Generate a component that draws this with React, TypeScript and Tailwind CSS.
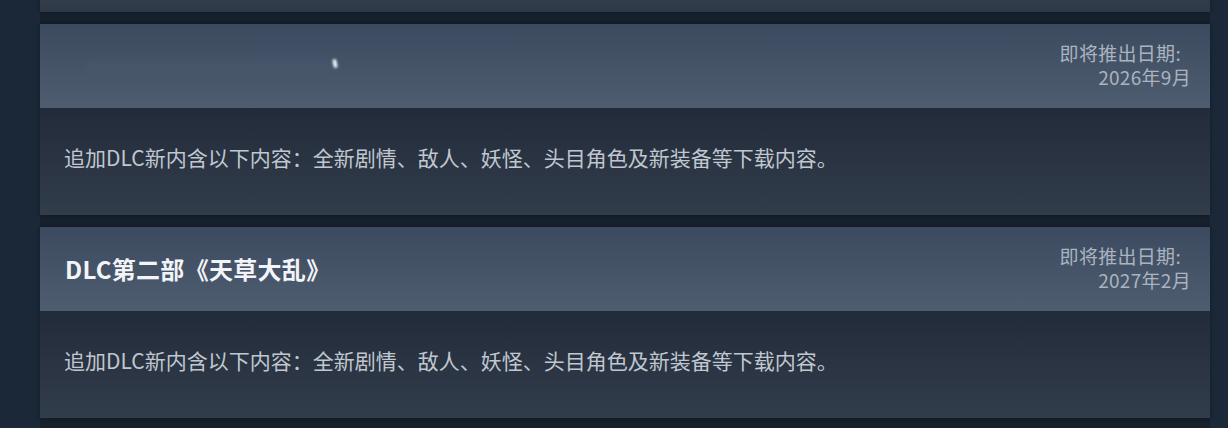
const font = { fontFamily: '"Noto Sans CJK SC", "Noto Sans", sans-serif' };

interface Dlc {
  title?: string;
  date: string;
}

const DLCS: Dlc[] = [
  { date: '2026年9月' },
  { title: 'DLC第二部《天草大乱》', date: '2027年2月' },
];

const DESC = '追加DLC新内含以下内容：全新剧情、敌人、妖怪、头目角色及新装备等下载内容。';

function DlcCard({ dlc }: { dlc: Dlc }) {
  return (
    <div className="shadow-[0_0_4px_rgba(0,0,0,0.35)]">
      <div className="relative h-[84px] flex items-center justify-between pl-[25px] pr-[19px] bg-gradient-to-b from-[#3c4a5f] to-[#4f5d71]">
        {dlc.title ? (
          <h2 className="text-[24px] leading-[30px] font-bold text-[#f2f4f7] tracking-[0.3px]">{dlc.title}</h2>
        ) : (
          <div className="relative w-[300px] h-[30px]">
            {/* faint blurred logo */}
            <div className="absolute left-[20px] top-[10px] w-[250px] h-[10px] rounded-full bg-[#566680] opacity-20 blur-[4px]" />
            <div className="absolute left-[268px] top-[8px] w-[4px] h-[9px] rounded-full bg-[#e8eef5] blur-[1px] -rotate-12" />
          </div>
        )}
        <div className="text-right text-[19px] leading-[24px] text-[#aab4c0] -mt-[2px] tracking-[0.3px]">
          <div>
            即将推出日期:<span className="inline-block w-[10px]" />
          </div>
          <div>{dlc.date}</div>
        </div>
      </div>
      <div className="h-[107px] pl-[24px] pt-[37px] bg-gradient-to-b from-[#222b39] to-[#323d4c]">
        <p className="text-[21px] leading-[24px] text-[#c0c7d0]">{DESC}</p>
      </div>
    </div>
  );
}

export default function App() {
  return (
    <div className="w-[1228px] h-[428px] bg-[#1b2838] overflow-hidden" style={font}>
      <div className="ml-[40px] w-[1170px] h-full bg-[#17202d] flex flex-col gap-[12px]">
        <div className="h-[12px] bg-gradient-to-b from-[#323d4c] to-[#2e3948] shadow-[0_0_4px_rgba(0,0,0,0.35)]" />
        {DLCS.map((d, i) => (
          <DlcCard key={i} dlc={d} />
        ))}
      </div>
    </div>
  );
}
